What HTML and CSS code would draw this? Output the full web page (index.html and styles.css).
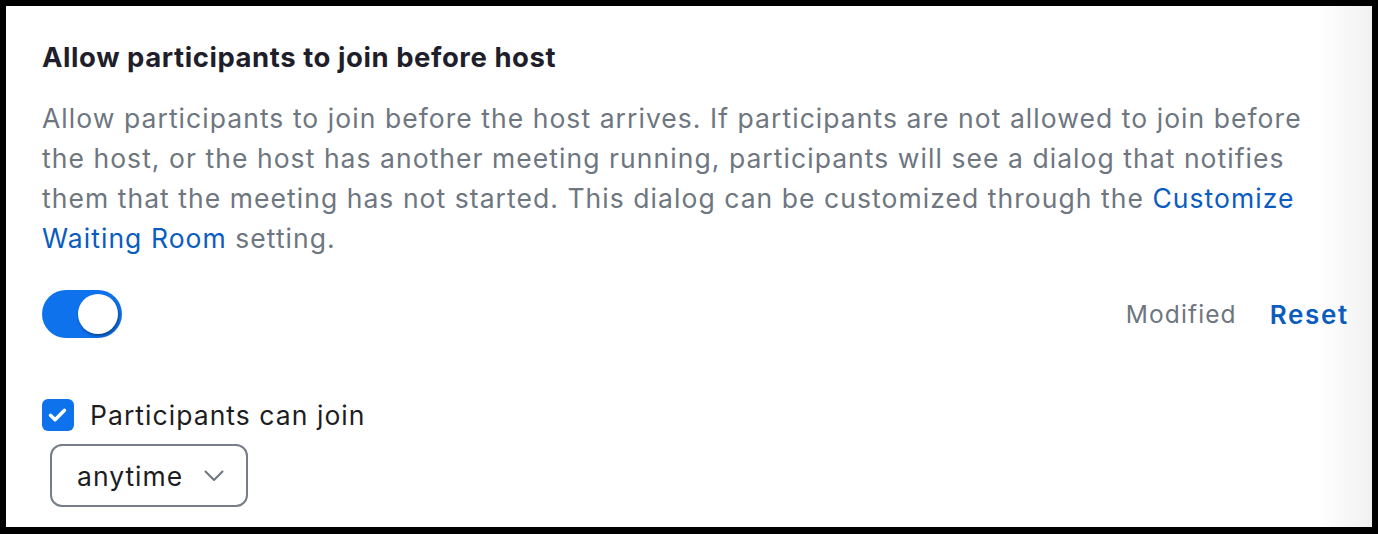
FILE: index.html
```html
<!DOCTYPE html>
<html lang="en">
<head>
    <meta charset="UTF-8">
    <meta name="viewport" content="width=device-width, initial-scale=1.0">
    <title>Meeting setting</title>
    <link rel="stylesheet" href="styles.css">
</head>
<body>
    <div class="panel">
        <div class="setting-title">Allow participants to join before host</div>
        <p class="setting-desc">
            Allow participants to join before the host arrives. If participants are not allowed to join before<br>
            the host, or the host has another meeting running, participants will see a dialog that notifies<br>
            them that the meeting has not started. This dialog can be customized through the <a href="#">Customize<br>
            Waiting Room</a> setting.
        </p>
        <div class="toggle-row">
            <button class="toggle on" aria-label="toggle"><span class="knob"></span></button>
            <div class="status">
                <span class="modified">Modified</span>
                <a href="#" class="reset">Reset</a>
            </div>
        </div>
        <label class="check-row">
            <span class="checkbox">
                <svg width="32" height="32" viewBox="0 0 32 32"><path d="M8.5 16.2l4.6 4.6 9.4-9.6" fill="none" stroke="#fff" stroke-width="3.4" stroke-linecap="round" stroke-linejoin="round"/></svg>
            </span>
            <span class="check-label">Participants can join</span>
        </label>
        <div class="select">
            <span>anytime</span>
            <svg width="20" height="12" viewBox="0 0 20 12"><path d="M1.5 1.5l8.5 8.5 8.5-8.5" fill="none" stroke="#6e7680" stroke-width="2" stroke-linecap="round" stroke-linejoin="round"/></svg>
        </div>
    </div>
</body>
</html>
```

FILE: styles.css
```css
html, body {
    margin: 0;
    height: 100%;
}
body {
    background: #000;
    font-family: Inter, "Noto Sans", sans-serif;
    padding: 6px 6px 7px 6px;
    box-sizing: border-box;
}
.panel {
    height: 100%;
    box-sizing: border-box;
    background: linear-gradient(to right, #fff 0, #fff 96%, #f1f1f1 100%);
    padding: 34px 23px 0 36px;
}
.setting-title {
    font-size: 27.5px;
    font-weight: 700;
    letter-spacing: 0.55px;
    color: #1f1f2b;
    line-height: 34px;
}
.setting-desc {
    margin: 24px 0 0 0;
    font-size: 26.5px;
    letter-spacing: 1.05px;
    line-height: 40px;
    white-space: nowrap;
    color: #6e7680;
}
.setting-desc a {
    color: #0b5cbf;
    text-decoration: none;
}
.toggle-row {
    display: flex;
    justify-content: space-between;
    align-items: center;
    margin-top: 32px;
}
.toggle {
    width: 80px;
    height: 48px;
    border: none;
    border-radius: 24px;
    background: #0e72ed;
    padding: 4px;
    display: flex;
    justify-content: flex-end;
    cursor: pointer;
}
.knob {
    width: 40px;
    height: 40px;
    border-radius: 50%;
    background: #fff;
    box-shadow: 1px 2px 3px rgba(0,0,0,0.4);
}
.status {
    display: flex;
    align-items: center;
    gap: 33px;
    font-size: 24.5px;
    letter-spacing: 1.1px;
}
.modified {
    color: #6e7680;
}
.reset {
    color: #0b5cbf;
    font-size: 26px;
    font-weight: 600;
    letter-spacing: 1.7px;
    text-decoration: none;
}
.check-row {
    display: flex;
    align-items: center;
    gap: 16px;
    height: 32px;
    margin-top: 61px;
}
.checkbox {
    width: 32px;
    height: 32px;
    border-radius: 6px;
    background: #0e72ed;
    display: flex;
}
.check-label {
    font-size: 26.5px;
    letter-spacing: 1.05px;
    line-height: 32px;
    color: #1d1d1f;
}
.select {
    margin: 13px 0 0 8px;
    width: 198px;
    height: 63px;
    box-sizing: border-box;
    border: 2px solid #767d88;
    border-radius: 12px;
    display: flex;
    align-items: center;
    justify-content: space-between;
    padding: 0 22px 0 25px;
    font-size: 26.5px;
    letter-spacing: 1px;
    color: #1d1d1f;
}
```
